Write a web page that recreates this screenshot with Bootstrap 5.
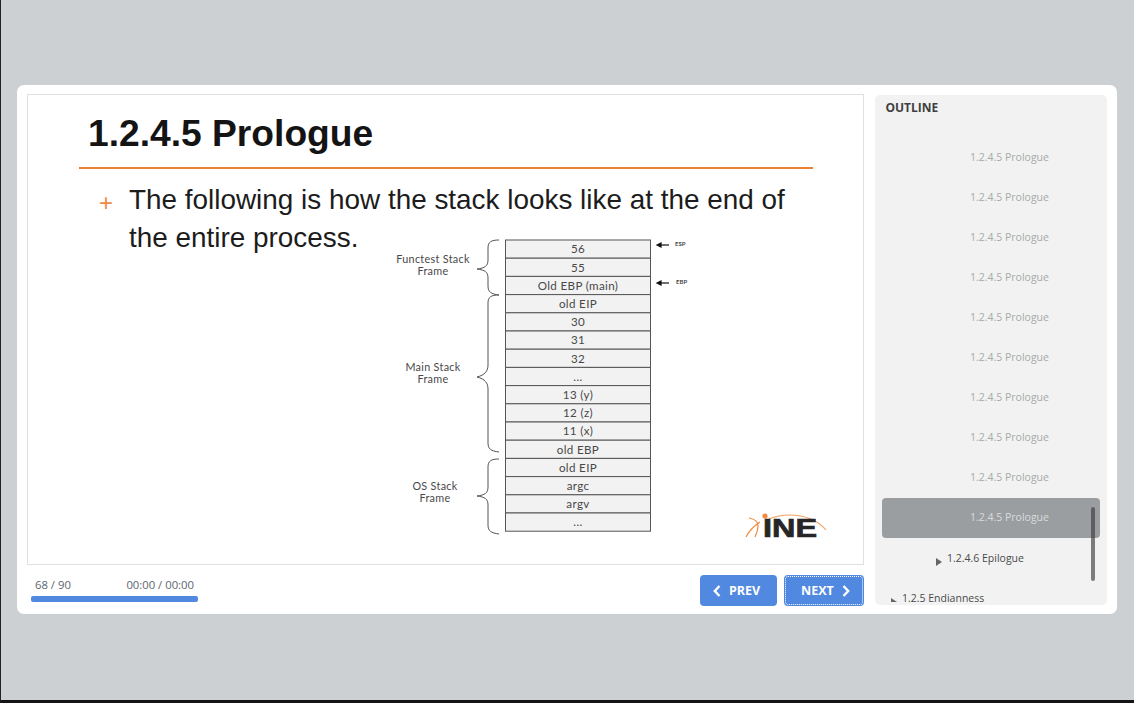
<!DOCTYPE html>
<html lang="en">

<head>
	<meta charset="utf-8">
	<meta name="viewport" content="width=device-width, initial-scale=1">
	<title>1.2.4.5 Prologue</title>
	<link href="https://cdn.jsdelivr.net/npm/bootstrap@5.3.5/dist/css/bootstrap.min.css" rel="stylesheet">
	<style>
		html, body { height: 100%; overflow: hidden; }
		body { background: #cdd0d3; font-family: "Open Sans", sans-serif; }
		.shell { height: 703px; border-left: 1px solid #222; border-bottom: 3px solid #141414; padding: 85px 0 0 16px; }
		.player { width: 1100px; height: 529px; background: #fff; border-radius: 7px; padding: 9px 10px 9px 10px; }
		.stage { width: 837px; }
		.slide { position: relative; height: 471px; border: 1px solid #dfe0e0; font-family: "Liberation Sans", Arial, sans-serif; color: #1c1c1c; }
		.slide-title { margin: 0 0 0 60px; padding-top: 17px; height: 72px; font-size: 37.2px; line-height: 43px; font-weight: 700; color: #141414; }
		.slide-rule { margin: 0 50px 0 51px; height: 2px; background: #ea8136; }
		.slide-body { padding: 12px 60px 0 71px; font-size: 27.9px; line-height: 38px; }
		.plus { width: 30px; flex: none; padding-top: 3px; color: #f08a45; font-size: 24px; font-weight: 400; }
		.diagram { position: absolute; left: -1px; top: -1px; }
		.diagram text { font-family: "Lato", sans-serif; fill: #484848; }
		.stage-foot { padding: 10px 0 0 0; }
		.meta { width: 171px; padding-left: 4px; }
		.meta-text { font-size: 11.3px; line-height: 20px; color: #5d6670; padding: 0 4px; }
		.meta-bar { height: 6px; background: #5189e0; border-radius: 2px; margin-top: 1px; }
		.nav-btn { height: 31px; padding: 0; background: #5189e0; border: 0; border-radius: 4px; color: #fff; font-size: 12.5px; font-weight: 700; }
		.nav-btn:hover { background: #5189e0; color: #fff; }
		.nav-btn span { padding-top: 2px; }
		.btn-prev { width: 77px; padding-left: 13px; }
		.btn-next { width: 80px; padding-left: 17px; outline: 1px dotted #fff; outline-offset: -2px; }
		.btn-gap { gap: 7px; }
		.outline { position: relative; width: 232px; height: 510px; margin: 1px 0 0 11px; background: #f2f2f2; border-radius: 5px; overflow: hidden; }
		.outline-head { margin: 0; padding: 4px 10.5px 0; height: 42px; font-size: 12px; line-height: 17px; font-weight: 700; color: #3f3f3f; }
		.outline-list { height: 465px; overflow: hidden; padding: 0 7px; }
		.outline-item { height: 40px; font-size: 10.5px; line-height: 40px; color: #a6aaa8; padding-left: 88px; border-radius: 4px; white-space: nowrap; }
		.outline-item.is-active { margin-top: 1px; line-height: 38px; background: #9b9ea1; color: #d9dbdc; }
		.outline-item.is-open { color: #4a4a4a; padding-left: 65px; position: relative; }
		.outline-item.is-sub { color: #4a4a4a; padding-left: 20px; position: relative; }
		.caret-r { display: inline-block; position: absolute; border-left: 6px solid #666; border-top: 4px solid transparent; border-bottom: 4px solid transparent; }
		.is-open .caret-r { left: 54px; top: 20px; }
		.is-sub .caret-r { left: 9px; top: 20px; }
		.scroll-thumb { position: absolute; right: 12px; top: 412px; width: 4px; height: 74px; background: rgba(60, 60, 60, .65); border-radius: 2px; }
	</style>
</head>

<body>
	<div class="shell">
		<div class="player d-flex">
			<div class="stage">
				<div class="slide">
					<h1 class="slide-title">1.2.4.5 Prologue</h1>
					<div class="slide-rule"></div>
					<div class="slide-body d-flex">
						<span class="plus">+</span>
						<p class="m-0">The following is how the stack looks like at the end of the entire process.</p>
					</div>
					<svg class="diagram" width="837" height="471" viewBox="27 94 837 471">
						<g id="cells" fill="#f2f2f2" stroke="#555" stroke-width="1"></g>
						<g id="labels" font-size="11.6" letter-spacing=".35" text-anchor="middle"></g>
						<g fill="none" stroke="#555" stroke-width="1">
							<path d="M499 240c-8 0-11 2-11 8v12c0 6-3 8-11 9 8 1 11 3 11 9v8c0 6 3 8 11 9" />
							<path d="M499 295c-8 0-11 2-11 8v62c0 6-3 10-11 12 8 2 11 6 11 12v54c0 6 3 8 11 9" />
							<path d="M499 459c-8 0-11 2-11 8v20c0 6-3 8-11 9 8 1 11 3 11 9v20c0 6 3 8 11 9" />
						</g>
						<g font-size="10.8" letter-spacing=".3" text-anchor="middle">
							<text x="433" y="263">Functest Stack</text>
							<text x="433" y="275">Frame</text>
							<text x="433" y="371">Main Stack</text>
							<text x="433" y="383">Frame</text>
							<text x="435" y="490">OS Stack</text>
							<text x="435" y="502">Frame</text>
						</g>
						<g stroke="#111" stroke-width="1.2" fill="#111">
							<path d="M669 245h-11" /><path d="M657 245l4-2v4z" />
							<path d="M669 283h-11" /><path d="M657 283l4-2v4z" />
						</g>
						<g font-size="6" font-weight="700">
							<text x="675" y="246">ESP</text>
							<text x="676" y="284">EBP</text>
						</g>
						<g fill="none" stroke="#f08a3c" stroke-width="1.2">
							<path d="M746 537c3-6 8-11 14-15" />
							<path d="M749 518c6 1 9 4 9 8 0 3-1 7-3 11" />
							<path d="M767 520c8-4 15-5 23-5 14 0 28 5 36 15" stroke="#f0a060" />
						</g>
						<circle cx="765" cy="516" r="2.6" fill="#f08a3c" />
						<text x="763" y="536.5" font-size="26" font-weight="900" style="font-family:'Liberation Sans',sans-serif;fill:#262626;stroke:#262626;stroke-width:.7" textLength="54" lengthAdjust="spacingAndGlyphs">INE</text>
					</svg>
				</div>
				<div class="stage-foot d-flex justify-content-between">
					<div class="meta">
						<div class="meta-text d-flex justify-content-between"><span>68 / 90</span><span>00:00 / 00:00</span></div>
						<div class="meta-bar"></div>
					</div>
					<div class="d-flex btn-gap">
						<button class="btn nav-btn btn-prev d-flex align-items-center gap-2" type="button">
							<svg width="8" height="12" viewBox="0 0 8 12"><path d="M6.5 1 1.8 6l4.7 5" fill="none" stroke="#fff" stroke-width="2.4" /></svg>
							<span>PREV</span>
						</button>
						<button class="btn nav-btn btn-next d-flex align-items-center gap-2" type="button">
							<span>NEXT</span>
							<svg width="8" height="12" viewBox="0 0 8 12"><path d="M1.5 1 6.2 6l-4.7 5" fill="none" stroke="#fff" stroke-width="2.4" /></svg>
						</button>
					</div>
				</div>
			</div>
			<div class="outline">
				<h6 class="outline-head">OUTLINE</h6>
				<div class="outline-list">
					<div class="outline-item">1.2.4.5 Prologue</div>
					<div class="outline-item">1.2.4.5 Prologue</div>
					<div class="outline-item">1.2.4.5 Prologue</div>
					<div class="outline-item">1.2.4.5 Prologue</div>
					<div class="outline-item">1.2.4.5 Prologue</div>
					<div class="outline-item">1.2.4.5 Prologue</div>
					<div class="outline-item">1.2.4.5 Prologue</div>
					<div class="outline-item">1.2.4.5 Prologue</div>
					<div class="outline-item">1.2.4.5 Prologue</div>
					<div class="outline-item is-active">1.2.4.5 Prologue</div>
					<div class="outline-item is-open"><span class="caret-r"></span>1.2.4.6 Epilogue</div>
					<div class="outline-item is-sub"><span class="caret-r"></span>1.2.5 Endianness</div>
				</div>
				<div class="scroll-thumb"></div>
			</div>
		</div>
	</div>

	<script src="https://cdn.jsdelivr.net/npm/bootstrap@5.3.5/dist/js/bootstrap.bundle.min.js"></script>
	<script>
		(() => {
			const rows = ['56', '55', 'Old EBP (main)', 'old EIP', '30', '31', '32', '...', '13 (y)', '12 (z)', '11 (x)', 'old EBP', 'old EIP', 'argc', 'argv', '...'];
			const cells = document.getElementById('cells'), labels = document.getElementById('labels');
			const ns = 'http://www.w3.org/2000/svg';
			rows.forEach((t, i) => {
				const y = 240 + i * 18.2;
				const r = document.createElementNS(ns, 'rect');
				r.setAttribute('x', 505.5); r.setAttribute('y', y); r.setAttribute('width', 145); r.setAttribute('height', 18.2);
				cells.append(r);
				const l = document.createElementNS(ns, 'text');
				l.setAttribute('x', 578); l.setAttribute('y', y + 13.4);
				l.textContent = t;
				labels.append(l);
			});
		})();
	</script>
</body>

</html>
